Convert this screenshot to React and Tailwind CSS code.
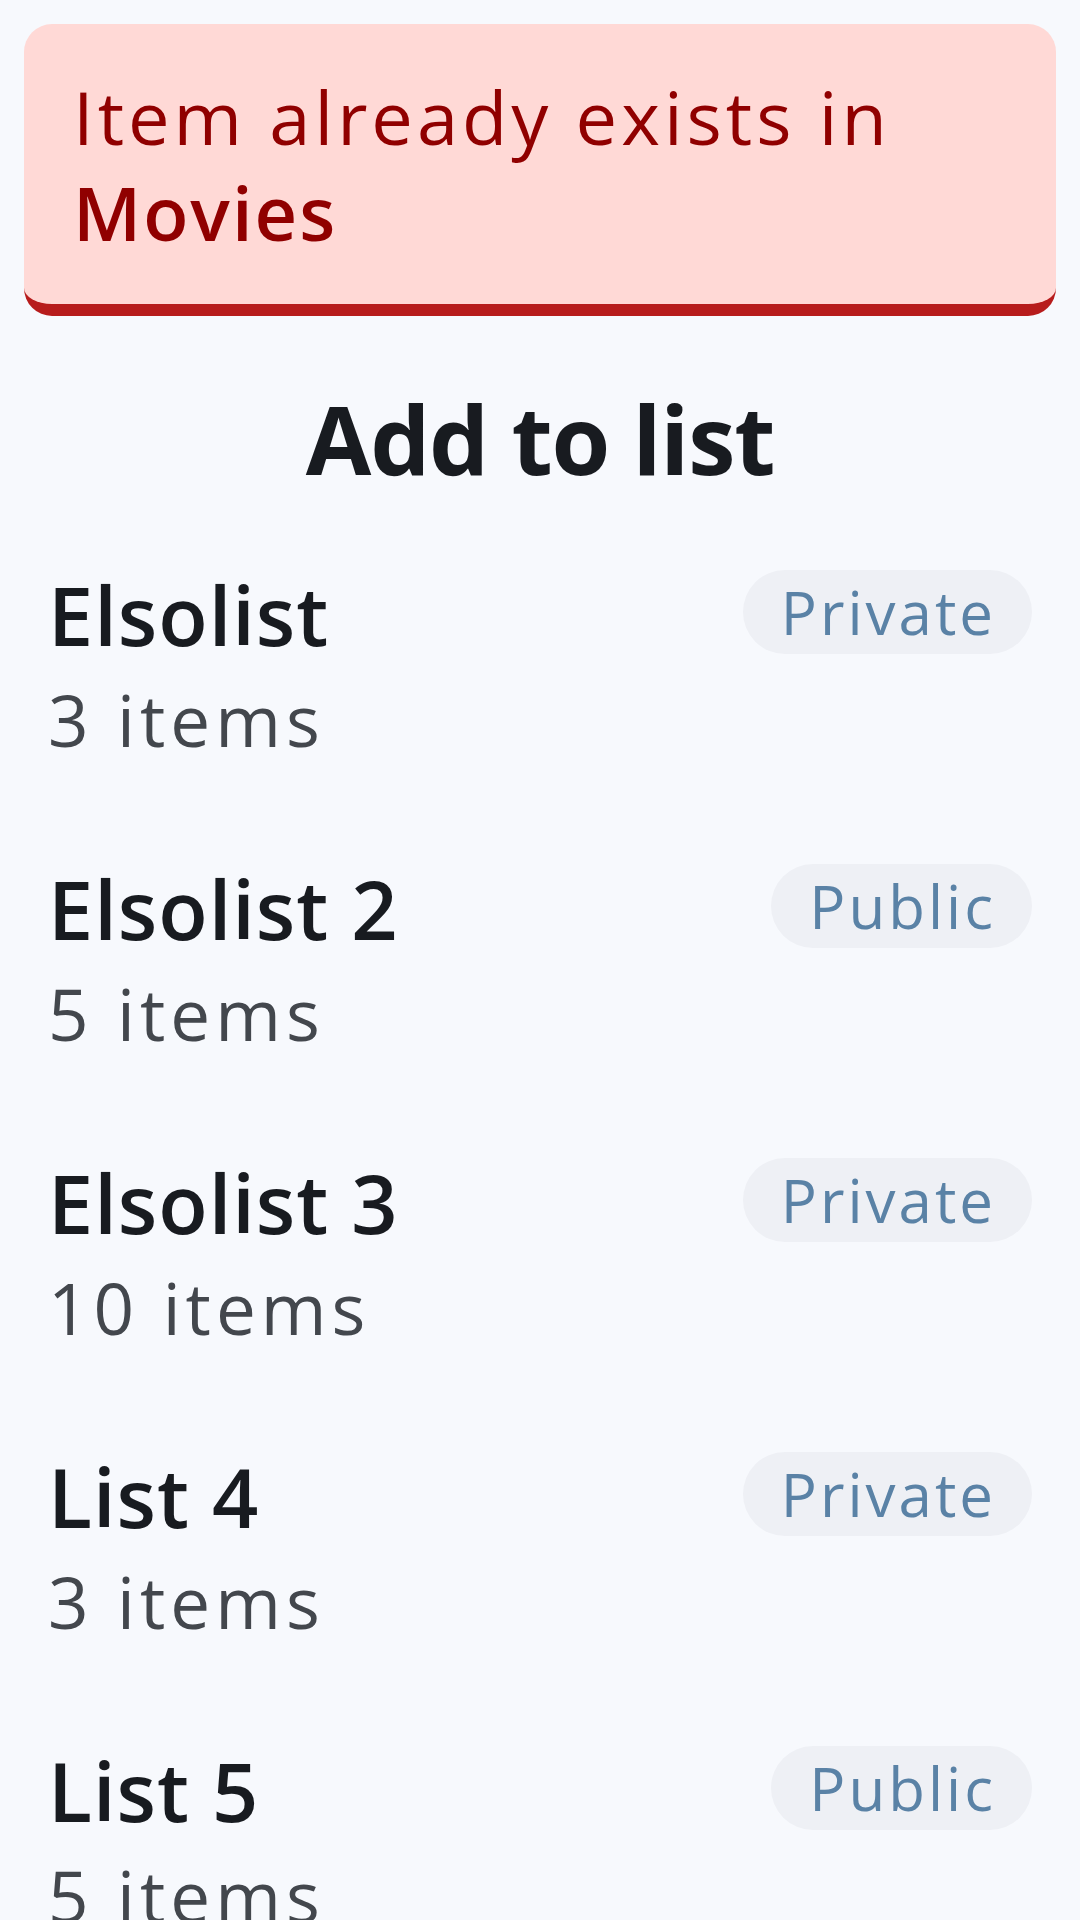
import React from 'react';

const lists = [
	{ name: 'Elsolist', count: 3, privacy: 'Private' },
	{ name: 'Elsolist 2', count: 5, privacy: 'Public' },
	{ name: 'Elsolist 3', count: 10, privacy: 'Private' },
	{ name: 'List 4', count: 3, privacy: 'Private' },
	{ name: 'List 5', count: 5, privacy: 'Public' },
];

const ListRow = ({ list }) => (
	<div className="flex items-start justify-between">
		<div className="flex flex-col">
			<span className="text-[81px] leading-[104px] font-semibold text-[#181b20] tracking-[1px]">{list.name}</span>
			<span className="text-[71px] leading-[106px] text-[#43474d] tracking-[5px]">{list.count} items</span>
		</div>
		<span className="mt-[7px] h-[84px] flex items-center rounded-full bg-[#eef0f5] pl-[38px] pr-[36px] text-[60px] text-[#5a82a6] tracking-[3px]">
			{list.privacy}
		</span>
	</div>
);

const App = () => {
	return (
		<div className="min-h-[1920px] bg-[#f7f9fd] pt-[24px] px-[24px]" style={{ fontFamily: '"Open Sans", sans-serif' }}>
			<div className="rounded-[28px] bg-[#ffd9d6] border-b-[12px] border-[#b71c1c] pl-[49px] pr-[30px] pt-[45px] pb-[43px]">
				<p className="text-[74px] leading-[96px] text-[#900000] tracking-[4px]">
					Item already exists in <span className="font-semibold tracking-[2px]">Movies</span>
				</p>
			</div>

			<h1 className="mt-[65px] text-center text-[95px] leading-[114px] font-bold text-[#181b20] tracking-[-1.2px]">Add to list</h1>

			<div className="mt-[68px] px-[24px] flex flex-col gap-[84px]">
				{lists.map((list) => (
					<ListRow key={list.name} list={list} />
				))}
			</div>
		</div>
	);
};

export default App;
